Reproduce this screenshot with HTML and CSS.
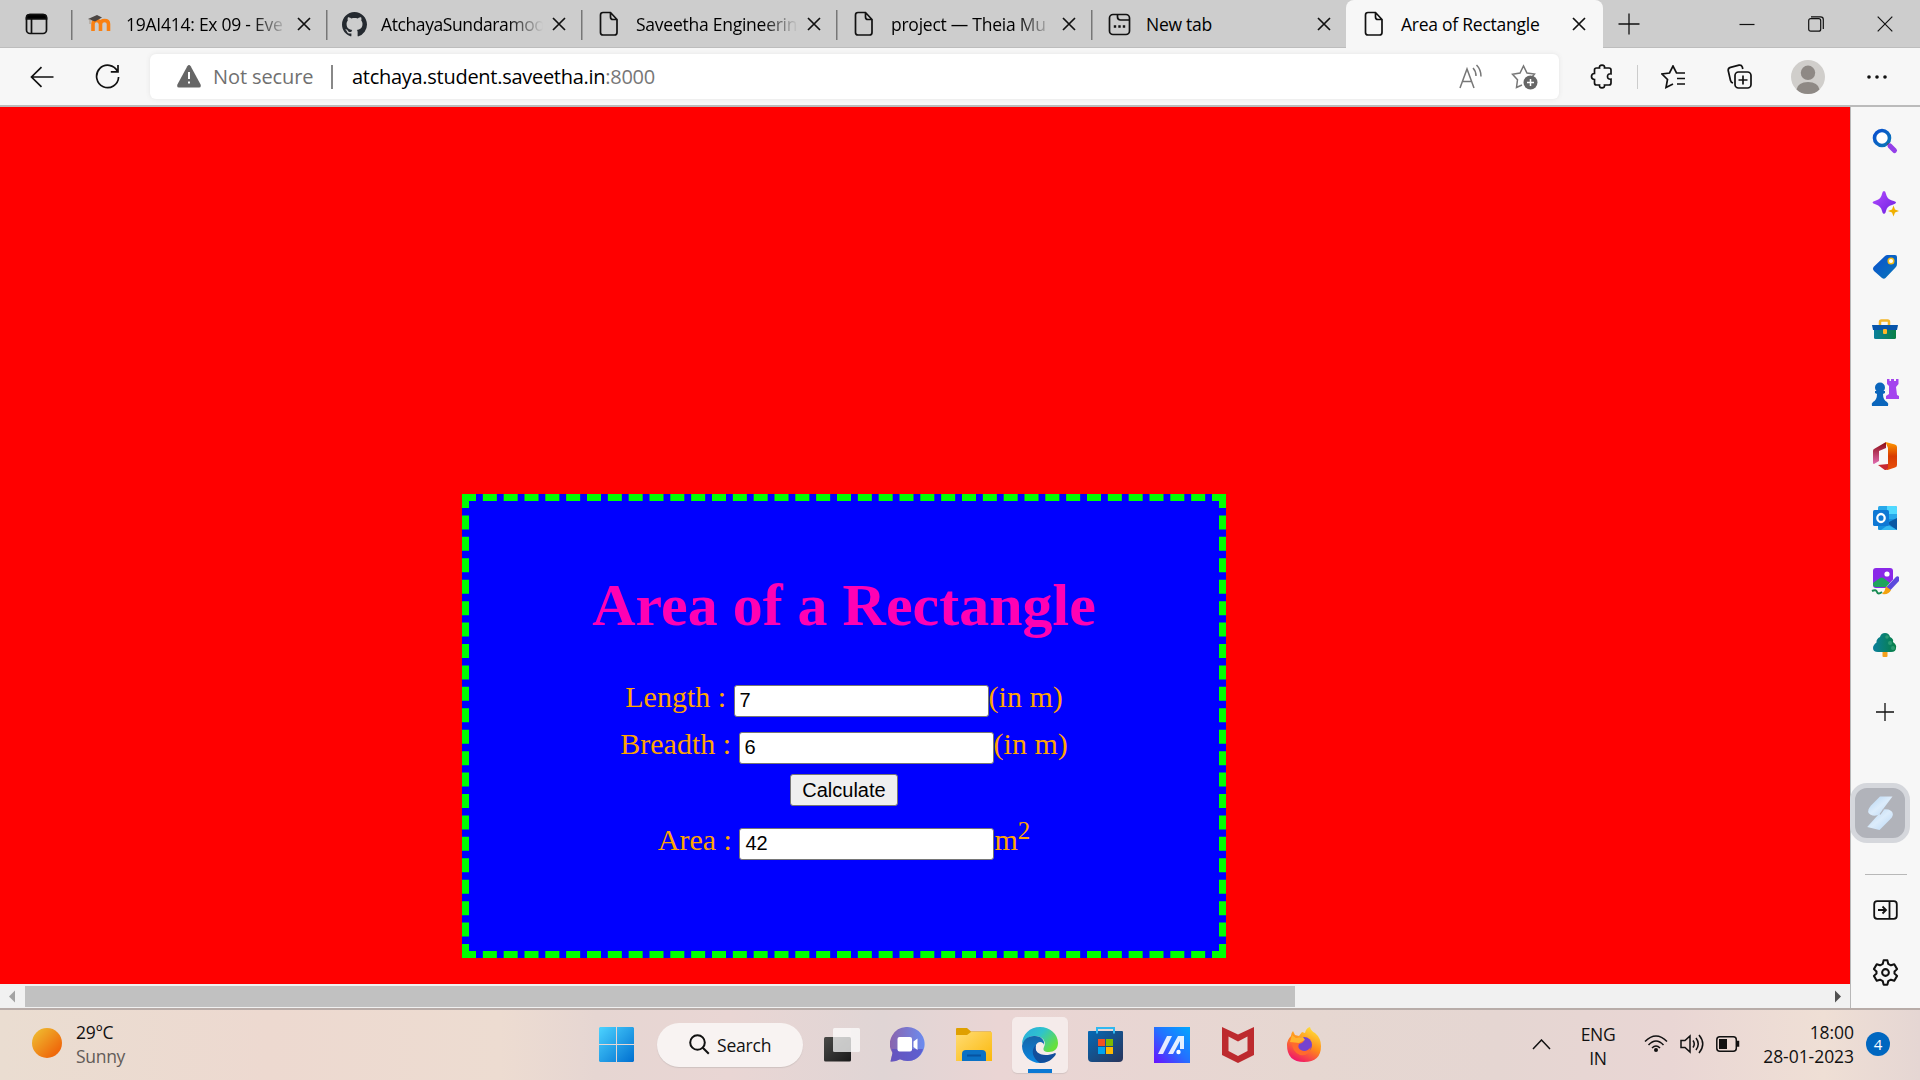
FILE: index.html
```html
<!DOCTYPE html>
<html lang="en">
<head>
<meta charset="utf-8">
<title>Area of Rectangle</title>
<link rel="stylesheet" href="styles.css">
</head>
<body>
<svg class="defs" aria-hidden="true">
  <defs>
    <linearGradient id="gBlue" x1="0" y1="0" x2="1" y2="1"><stop offset="0" stop-color="#0a4fd0"/><stop offset="1" stop-color="#0a78b8"/></linearGradient>
    <linearGradient id="gPurple" x1="0" y1="0" x2="1" y2="1"><stop offset="0" stop-color="#b44cff"/><stop offset="1" stop-color="#6b1fe0"/></linearGradient>
    <linearGradient id="gTool" x1="0" y1="0" x2="1" y2="0"><stop offset="0" stop-color="#0a7f9c"/><stop offset="1" stop-color="#088044"/></linearGradient>
    <linearGradient id="gOfficeR" x1="0" y1="0" x2="0" y2="1"><stop offset="0" stop-color="#ff9a00"/><stop offset=".5" stop-color="#d83b01"/><stop offset="1" stop-color="#e8500c"/></linearGradient>
    <linearGradient id="gOfficeL" x1="0" y1="0" x2="0" y2="1"><stop offset="0" stop-color="#8c0a10"/><stop offset="1" stop-color="#e06bb0"/></linearGradient>
    <linearGradient id="gSun" x1="0" y1="0" x2="1" y2="1"><stop offset=".1" stop-color="#efb92f"/><stop offset=".8" stop-color="#ef6a0c"/></linearGradient>
    <linearGradient id="gWin" x1="0" y1="0" x2="35" y2="35" gradientUnits="userSpaceOnUse"><stop offset="0" stop-color="#4cd3ff"/><stop offset="1" stop-color="#006fd0"/></linearGradient>
    <linearGradient id="gChat" x1="0" y1="0" x2="1" y2="0"><stop offset="0" stop-color="#8a63ad"/><stop offset="1" stop-color="#6b8cf0"/></linearGradient>
    <linearGradient id="gFolder" x1="0" y1="0" x2="1" y2="1"><stop offset="0" stop-color="#ffdc73"/><stop offset="1" stop-color="#fbb80c"/></linearGradient>
    <linearGradient id="gEdgeTop" x1="0" y1="0" x2="1" y2=".6"><stop offset="0" stop-color="#2aa9e0"/><stop offset=".5" stop-color="#2fc3cc"/><stop offset="1" stop-color="#66e03c"/></linearGradient>
    <linearGradient id="gEdgeSide" x1="0" y1="0" x2="0" y2="1"><stop offset="0" stop-color="#1565a8"/><stop offset="1" stop-color="#0a86e0"/></linearGradient>
    <linearGradient id="gStore" x1="0" y1="0" x2="1" y2="1"><stop offset="0" stop-color="#0569b5"/><stop offset="1" stop-color="#29345a"/></linearGradient>
    <linearGradient id="gAsus" x1="0" y1="1" x2="1" y2="0"><stop offset="0" stop-color="#6a10ff"/><stop offset=".5" stop-color="#2470ff"/><stop offset="1" stop-color="#00a8ff"/></linearGradient>
    <linearGradient id="gFox" x1=".8" y1="0" x2=".3" y2="1"><stop offset="0" stop-color="#ffe63c"/><stop offset=".5" stop-color="#ff8a1a"/><stop offset="1" stop-color="#f0136c"/></linearGradient>
    <linearGradient id="gTask" x1="0" y1="0" x2="1" y2="1"><stop offset="0" stop-color="#4a4a48"/><stop offset="1" stop-color="#1a1a1a"/></linearGradient>
    <linearGradient id="gPale" x1="0" y1="0" x2="1" y2="1"><stop offset="0" stop-color="#b4d4f2"/><stop offset=".5" stop-color="#dcecfb"/><stop offset="1" stop-color="#b8d6f4"/></linearGradient>
    <symbol id="page" viewBox="0 0 20 26"><path d="M4 1.5H11.5L18 8.500V21.500Q18 24 15.500 24H4Q1.500 24 1.500 21.500V4Q1.500 1.500 4 1.500ZM11.500 1.500V6Q11.500 8.500 14 8.500H18"/></symbol>
    <symbol id="x" viewBox="0 0 14 14"><path d="M1 1 13 13M13 1 1 13"/></symbol>
  </defs>
</svg>

<header class="tabstrip">
  <div class="tab-actions">
    <svg class="line" width="23" height="22" viewBox="0 0 23 22"><rect x="1.500" y="1.500" width="20" height="19" rx="3.500"/><path d="M1.500 6V4.500Q1.500 1.500 5 1.500H18Q21.500 1.500 21.500 4.500V6Z" fill="#000"/><path d="M6.500 6V20"/></svg>
  </div>
  <div class="tab">
    <span class="fav"><svg width="25" height="18" viewBox="0 0 25 18"><path d="M6 16V9Q6 5.500 9.500 5.500T13.500 9V16M13.500 9Q13.500 5.500 17.500 5.500T21.500 9V16" fill="none" stroke="#f98012" stroke-width="3.600"/><path d="M1 4 10 0 15 2.500 8 6.500Z" fill="#4c4644"/><path d="M3 4V9" stroke="#a89888"/></svg></span>
    <span class="title fade">19AI414: Ex 09 - Eve</span><svg class="close"><use href="#x"/></svg>
  </div>
  <div class="tab">
    <span class="fav"><svg width="25" height="25" viewBox="0 0 16 16"><path fill="#24292f" d="M8 0C3.580 0 0 3.580 0 8c0 3.540 2.290 6.530 5.470 7.590.4.070.55-.17.55-.38 0-.19-.01-.82-.01-1.490-2.010.37-2.530-.49-2.690-.94-.09-.23-.48-.94-.82-1.130-.28-.15-.68-.52-.01-.53.63-.01 1.080.58 1.230.82.72 1.210 1.870.87 2.330.66.07-.52.28-.87.51-1.070-1.780-.2-3.640-.89-3.640-3.950 0-.87.31-1.590.82-2.150-.08-.2-.36-1.020.08-2.120 0 0 .67-.21 2.200.82.64-.18 1.320-.27 2-.27s1.360.09 2 .27c1.530-1.040 2.200-.82 2.200-.82.44 1.100.16 1.920.08 2.120.51.56.82 1.270.82 2.150 0 3.070-1.870 3.750-3.650 3.950.29.25.54.73.54 1.480 0 1.070-.01 1.930-.01 2.200 0 .21.15.46.55.38A8.010 8.010 0 0 0 16 8c0-4.420-3.580-8-8-8z"/></svg></span>
    <span class="title fade repo">AtchayaSundaramoo</span><svg class="close"><use href="#x"/></svg>
  </div>
  <div class="tab">
    <span class="fav"><svg class="line page"><use href="#page"/></svg></span>
    <span class="title fade">Saveetha Engineerin</span><svg class="close"><use href="#x"/></svg>
  </div>
  <div class="tab">
    <span class="fav"><svg class="line page"><use href="#page"/></svg></span>
    <span class="title fade">project — Theia Mu</span><svg class="close"><use href="#x"/></svg>
  </div>
  <div class="tab">
    <span class="fav"><svg class="line" width="23" height="23" viewBox="0 0 23 23"><rect x="1.500" y="1.500" width="20" height="20" rx="3.500"/><path d="M9.500 1.500V4Q9.500 7 12.500 7H21.500"/><path d="M5.800 13.500h2.400M10.300 13.500h2.400M14.800 13.500h2.400" stroke-width="2.600"/></svg></span>
    <span class="title">New tab</span><svg class="close"><use href="#x"/></svg>
  </div>
  <div class="tab active">
    <span class="fav"><svg class="line page"><use href="#page"/></svg></span>
    <span class="title">Area of Rectangle</span><svg class="close"><use href="#x"/></svg>
  </div>
  <svg class="newtab" width="22" height="22" viewBox="0 0 22 22"><path d="M11 .5V21.500M.5 11H21.500"/></svg>
  <div class="window-controls">
    <svg width="16" height="16" viewBox="0 0 16 16"><path d="M.5 8.500H15.500"/></svg>
    <svg width="16" height="16" viewBox="0 0 16 16"><rect x=".7" y="2.700" width="12" height="12.500" rx="2"/><path d="M3 .8H12.500Q15.300.8 15.300 3.500V13"/></svg>
    <svg width="16" height="16" viewBox="0 0 16 16"><path d="M.7.7 15.300 15.300M15.300.7.7 15.300"/></svg>
  </div>
</header>

<nav class="toolbar">
  <svg class="line back" width="24" height="22" viewBox="0 0 24 22"><path d="M23.500 11H1.500M11.500 1.200 1.500 11 11.500 20.800"/></svg>
  <svg class="line reload" width="25" height="26" viewBox="0 0 25 26"><path d="M22.500 7.500A11 11.200 0 1 0 23.600 13M23 1V7.800H15.800"/></svg>
  <div class="address">
    <svg class="warn" width="24" height="23" viewBox="0 0 24 23"><path d="M10.300 1.200Q12-1 13.700 1.200L23.600 19.500Q24.500 22.500 22 22.500H2Q-.5 22.500.4 19.500Z" fill="#666"/><path d="M12 7V14M12 16.500V18.500" stroke="#fff" stroke-width="2"/></svg>
    <span class="security">Not secure</span>
    <i class="bar"></i>
    <span class="url">atchaya.student.saveetha.in<span class="port">:8000</span></span>
    <svg class="read" width="24" height="26" viewBox="0 0 24 26"><path d="M1 24 8 5 15 24M3.500 17.500H12.500M14 4Q17 7 17 12M17.500 1Q22 5.500 22 12.500"/></svg>
    <svg class="addfav" width="27" height="26" viewBox="0 0 27 26"><path d="M11 21 5.500 23.500 6.500 15.800 1.500 10.200 9 9 12.500 2 16 9 23.500 10 21.500 12.500"/><circle cx="19.500" cy="18.500" r="7" fill="#666" stroke="none"/><path d="M19.500 15V22M16 18.500H23" stroke="#fff"/></svg>
  </div>
  <svg class="line puzzle" width="23" height="25" viewBox="0 0 23 25"><path d="M6.500 4H9.500Q9 1.200 12 1.200T14.500 4H19Q21 4 21 6V9.800Q17.500 9.500 17.500 12.500T21 15.200V19Q21 21 19 21H14.500Q15 23.800 12 23.800T9.500 21H6.500Q4.500 21 4.500 19V15.500Q1.500 15.500 1.500 12.500T4.500 9.500V6Q4.500 4 6.500 4Z"/></svg>
  <i class="bar pale"></i>
  <svg class="line favs" width="25" height="24" viewBox="0 0 25 24"><path d="M12 19 5 22.500 6.500 14.500 1 9 8.500 8 12 1 15.500 8H24M16 13.500H24M16 19H24"/></svg>
  <svg class="line coll" width="25" height="25" viewBox="0 0 25 25"><rect x="8" y="8" width="16" height="16" rx="3.500"/><path d="M16 11.500V20.500M11.500 16H20.500M6 19Q4 18.500 3.500 16.500L1.200 6.500Q1 4 3.500 3.400L12 1.200Q14.500.8 15.300 3L15.800 5"/></svg>
  <svg class="avatar" width="34" height="34" viewBox="0 0 34 34"><circle cx="17" cy="17" r="17" fill="#d0cecb"/><circle cx="17" cy="12.800" r="7.200" fill="#8e8985"/><path d="M5.500 29.500Q7 22 17 22T28.500 29.500Q24 34 17 34T5.500 29.500" fill="#8e8985"/></svg>
  <svg class="more" width="20" height="4" viewBox="0 0 20 4"><circle cx="2" cy="2" r="1.800"/><circle cx="10" cy="2" r="1.800"/><circle cx="18" cy="2" r="1.800"/></svg>
</nav>

<div class="workspace">
  <main class="viewport">
    <div class="webpage">
      <form class="box">
        <h1>Area of a Rectangle</h1>
        <div class="row length">Length : <input type="text" value="7">(in m)</div>
        <div class="row breadth">Breadth : <input type="text" value="6">(in m)</div>
        <button type="button">Calculate</button>
        <div class="row area">Area : <input type="text" value="42">m<sup>2</sup></div>
      </form>
    </div>
    <div class="scrollbar">
      <svg width="25" height="24" viewBox="0 0 25 24"><path d="M15 6.500V18.500L9 12.500Z" fill="#a3a3a3"/></svg>
      <div class="thumb"></div>
      <svg class="right" width="25" height="24" viewBox="0 0 25 24"><path d="M10 6.500V18.500L16 12.500Z" fill="#505050"/></svg>
    </div>
  </main>
  <aside class="sidebar">
    <div class="slot"><svg viewBox="0 0 28 28"><circle cx="11" cy="11" r="7.500" fill="#fff" stroke="url(#gBlue)" stroke-width="3.600"/><path d="M16.500 16.500 19 19" stroke="#555" stroke-width="2"/><path d="M19 19 23.500 23.500" stroke="#9440e8" stroke-width="5" stroke-linecap="round"/></svg></div>
    <div class="slot"><svg viewBox="0 0 28 28"><path d="M13 1Q14.500 1 15 4 16 9 21 10.500 25 11.500 25 12.500T21 15Q16 16 15 21 14.500 24 13 24T11 21Q10 16 5 14.500 1.500 13.500 1.500 12.500T5 10.500Q10 9 11 4 11.500 1 13 1Z" fill="url(#gPurple)"/><path d="M22.500 15.500 24 19.500 28 21 24 22.500 22.500 26.500 21 22.500 17 21 21 19.500Z" fill="#f0b000"/></svg></div>
    <div class="slot"><svg viewBox="0 0 28 28"><path d="M2.500 14 14 3Q15 2 16.500 2H24Q26 2 26 4V11Q26 13 24.500 14.500L14.500 25Q13 26.500 11 25L3 18Q1 16 2.500 14Z" fill="url(#gBlue)"/><circle cx="20" cy="8" r="2.800" fill="#fff" stroke="#f7be16" stroke-width="1.500"/></svg></div>
    <div class="slot"><svg viewBox="0 0 28 28"><path d="M9 10V6Q9 4.500 10.500 4.500H16.500Q18 4.500 18 6V10" fill="none" stroke="#f3b62a" stroke-width="2.500"/><rect x="3" y="11" width="22" height="12" rx="1.500" fill="url(#gTool)"/><path d="M1 9H27L26 14H2Z" fill="#0755aa"/><rect x="12" y="13" width="4" height="5" rx="1" fill="#ffb726"/></svg></div>
    <div class="slot"><svg viewBox="0 0 28 28"><path d="M16 0H18.500V2H20V0H23V2H25V0H27.500V5L25 8 26 16 28 17V20H15V17L18 15V7L16 5Z" fill="#a444ee"/><circle cx="9" cy="8.500" r="5" fill="#0b66bc"/><path d="M4 12H14V14L12 15Q12 21 16 23 18 24.500 17 27H1Q0 24.500 2 23 6 21 6 15L4 14Z" fill="#0b66bc"/></svg></div>
    <div class="slot"><svg viewBox="0 0 28 28"><path d="M3 7 15 0V6L8 9V19L3 22Q2 22 2 21V9Q2 7.500 3 7Z" fill="url(#gOfficeL)"/><path d="M14.500 0 24 2.500Q26 3 26 5V23Q26 25 24 25.500L15 28.500 17 22V6Z" fill="url(#gOfficeR)"/><path d="M7 23 17 22V26L14.500 28.500Z" fill="#c8282f"/></svg></div>
    <div class="slot"><svg viewBox="0 0 28 28"><rect x="7" y="1" width="19" height="24" rx="1.500" fill="#28a8ea"/><path d="M16 1H24.500Q26 1 26 2.500V9H16Z" fill="#50d9ff"/><path d="M7 14H26V25H9Q7 25 7 23Z" fill="#1490df"/><path d="M26 13V25L16 18Z" fill="#0a58a4"/><path d="M17 20 26 25H10Z" fill="#35b8f1"/><rect x="2" y="5" width="16" height="16" rx="1.500" fill="#0f78d4"/><ellipse cx="10" cy="13" rx="3.700" ry="4" fill="none" stroke="#fff" stroke-width="2.300"/></svg></div>
    <div class="slot"><svg viewBox="0 0 28 28"><rect x="2" y="0" width="20" height="20" rx="3" fill="#8a28e8"/><circle cx="16" cy="6" r="2.600" fill="#fff"/><path d="M2 15 9 10Q11 9 13 10.500L19 15 17 19H5Q2 19 2 16Z" fill="#20a45c"/><path d="M28 10 18 21" stroke="#f6f6f6" stroke-width="7"/><path d="M26.500 11 18 20" stroke="#5b49dd" stroke-width="5" stroke-linecap="round"/><path d="M15 18.500 20 22Q18 27 11 26 14 23.500 15 18.500Z" fill="#f4a20d"/><path d="M1 23Q5 21 6 24T11 24" fill="none" stroke="#168b52" stroke-width="2"/></svg></div>
    <div class="slot"><svg viewBox="0 0 28 28"><rect x="11.500" y="19" width="5" height="7" rx="1" fill="#f5a01b"/><path d="M14 2Q18 2 19 6 23 8 22 11 26 14 25 17 25 21 20 21H7Q2 21 2 17 2 14 5.500 11.500 5 8 9 6 10 2 14 2Z" fill="url(#gTool)"/><g fill="#3aa57c" opacity=".7"><circle cx="16" cy="6" r="1.800"/><circle cx="19" cy="12" r="2"/><circle cx="22" cy="17" r="2"/></g></svg></div>
    <div class="slot add"><svg class="thin" width="18" height="18" viewBox="0 0 18 18"><path d="M9 0V18M0 9H18"/></svg></div>
    <div class="widget"><svg viewBox="0 0 26 34"><path d="M13 .5H25.500L12 18.500Q10 20 5.500 19.500 0 18 1.500 13.500 2 12 4 9.500Z" fill="url(#gPale)"/><path d="M12.500 34 .2 31 15 14.500Q17 12.500 21.500 13.500 27 15.500 25.500 20 25 21.500 23 23.500Z" fill="url(#gPale)"/><path d="M13 18.500 16.500 13.500" stroke="#b1b3ba" stroke-width="1.200"/></svg></div>
    <hr>
    <div class="slot panel"><svg class="line" width="25" height="20" viewBox="0 0 25 20"><rect x="1.200" y="1.200" width="22.600" height="17.600" rx="3"/><path d="M16.500 1V19M5 10H13M9.500 6.500 13 10 9.500 13.500"/></svg></div>
    <div class="slot gear"><svg class="line" viewBox="0 0 24 24"><circle cx="12" cy="12" r="3"/><path d="M10.300 1.200H13.700L14.400 4.300 16.800 5.600 19.800 4.600 22.300 9 20 11.200V12.800L22.300 15 19.800 19.400 16.800 18.400 14.400 19.700 13.700 22.800H10.300L9.600 19.700 7.200 18.400 4.200 19.400 1.700 15 4 12.800V11.200L1.700 9 4.200 4.600 7.200 5.600 9.600 4.300Z" stroke-linejoin="round"/></svg></div>
  </aside>
</div>

<footer class="taskbar">
  <div class="weather">
    <svg width="30" height="30" viewBox="0 0 30 30"><circle cx="15" cy="15" r="15" fill="url(#gSun)"/></svg>
    <div class="lines"><span>29°C</span><span class="dim">Sunny</span></div>
  </div>
  <div class="apps">
    <svg width="35" height="35" viewBox="0 0 35 35"><path d="M1 0H17V17H0V1ZM18 0H34L35 1V17H18ZM0 18H17V35H1L0 34ZM18 18H35V34L34 35H18Z" fill="url(#gWin)"/></svg>
    <div class="search"><svg width="21" height="21" viewBox="0 0 21 21"><circle cx="8.500" cy="8.500" r="7.300"/><path d="M13.800 13.800 19.800 19.800"/></svg><span>Search</span></div>
    <svg class="task" width="36" height="35" viewBox="0 0 36 35"><rect y="10" width="27" height="24.500" rx="1.500" fill="url(#gTask)"/><rect x="9" y="1" width="27" height="24" rx="1.500" fill="#fff" opacity=".72"/><path d="M27 1H34.500Q36 1 36 2.500V25H9V10H27Z" fill="#eee" opacity=".1"/></svg>
    <svg class="chat" width="35" height="35" viewBox="0 0 35 35"><path d="M17.500 0A17 17 0 1 1 10 32.200Q5 35 .5 34.500L2.500 26A17 17 0 0 1 17.500 0Z" fill="url(#gChat)"/><path d="M2 22H33Q29 34 17.500 34 13 34 10 32.300 5 35 .5 34.500L2.500 26Z" fill="#574fc4" opacity=".7"/><rect x="7.500" y="10" width="14.500" height="14.500" rx="2" fill="#fff"/><path d="M23.500 14.500 27.500 11.500V23L23.500 20Z" fill="#fff"/></svg>
    <svg class="folder" width="36" height="34" viewBox="0 0 36 34"><path d="M0 1Q0 0 1 0H11L15 3.500H35V10H0Z" fill="#dfa000"/><path d="M0 7H11L15 4H35Q36 4 36 5V33H0Z" fill="url(#gFolder)"/><path d="M6 33V26Q6 22 10 22H26Q30 22 30 26V33Z" fill="#0b71c4"/><path d="M11 27.500H25" stroke="#0753a0" stroke-width="2"/></svg>
    <div class="running"><svg width="36" height="36" viewBox="0 0 36 36"><path d="M18 0C28 0 36 7 36 16 36 22 32 25 27 25 22 25 20.500 23 22 20 25 14 20 9 13 9 6 9 1 14 0 18 0 7 8 0 18 0Z" fill="url(#gEdgeTop)"/><path d="M0 19C1 12 7 8.500 13 9 19 9 23 13 22 18 22 15 16 13 14 18 12 26 19 33 28 32 25 35 22 36 18 36 8 36 0 28 0 19Z" fill="url(#gEdgeSide)"/><path d="M14 18C11 26 21 31 33 26 34 26 34 27 33.500 28 30 33 25 36 18 36 11 32 8 23 14 18Z" fill="#124e9b"/></svg></div>
    <svg class="store" width="35" height="35" viewBox="0 0 35 35"><path d="M9 7V1H26V7" fill="none" stroke="#30b8f0" stroke-width="2"/><path d="M0 5Q0 4 1 4H34Q35 4 35 5V31Q35 35 31 35H4Q0 35 0 31Z" fill="url(#gStore)"/><path d="M9 2V6.500M26 2V6.500" stroke="#30b8f0" stroke-width="2"/><path d="M10 12H17V19H10Z" fill="#f25022"/><path d="M18 12H25V19H18Z" fill="#7fba00"/><path d="M10 20H17V27H10Z" fill="#00a4ef"/><path d="M18 20H25V27H18Z" fill="#ffb900"/></svg>
    <svg class="asus" width="36" height="36" viewBox="0 0 36 36"><path d="M0 0H36V36H0Z" fill="url(#gAsus)"/><path d="M4 27 13 9H18L9 27ZM14 27 24 9H30V22H26V14L19 27Z" fill="#fff" opacity=".88"/><circle cx="24.500" cy="25" r="2.200" fill="#fff"/></svg>
    <svg class="mcafee" width="32" height="36" viewBox="0 0 32 36"><path d="M0 0 16 7.500 32 0V28L16 36 0 28ZM6.500 9.500V24L16 29 25.500 24V9.500L16 14.500Z" fill="#bd2a2e" fill-rule="evenodd"/></svg>
    <svg class="fox" width="34" height="36" viewBox="0 0 34 36"><path d="M4 9Q4 6 6 4L8 8 12 9 15 5 18 6Q19 1 23 0 24 4 28 6 34 11 34 19 34 35 17 35 0 35 0 18 0 13 4 9Z" fill="url(#gFox)"/><circle cx="17" cy="18" r="8" fill="#7543cf"/><path d="M5 15Q11 12 17 14 15 17 12 17 10 21 14 23 19 26 24 20 22 30 13 28 5 25 5 15Z" fill="#ff6a2d"/><path d="M3 15 5 8 9 11 16 10 18 13 12 16Z" fill="#ffb32e"/></svg>
  </div>
  <div class="tray">
    <svg class="chev" width="19" height="11" viewBox="0 0 19 11"><path d="M1 10 9.500 1 18 10"/></svg>
    <div class="lines lang"><span>ENG</span><span>IN</span></div>
    <svg class="wifi" width="24" height="18" viewBox="0 0 24 18"><path d="M1 6.500Q12-4.500 23 6.500M4.500 10Q12 2 19.500 10M8 13Q12 9 16 13"/><circle cx="12" cy="15" r="2" fill="#111" stroke="none"/></svg>
    <svg class="sound" width="25" height="20" viewBox="0 0 25 20"><path d="M1 6.500H5L10 2V18L5 13.500H1ZM13 6.500Q15.500 10 13 13.500M16 4Q20.500 10 16 16M19 1Q26.500 10 19 19"/></svg>
    <svg class="battery" width="24" height="16" viewBox="0 0 24 16"><rect x=".8" y=".8" width="19.500" height="14.400" rx="3"/><path d="M21.500 5.500H22.500V10H21.500Z" fill="#111"/><path d="M3 3H11V13H3Z" fill="#111" stroke="none"/></svg>
    <div class="lines clock"><span>18:00</span><span>28-01-2023</span></div>
    <span class="badge">4</span>
  </div>
</footer>
</body>
</html>
```
FILE: styles.css
```css
* { box-sizing: border-box; }
html, body { height: 100%; }
body {
  margin: 0;
  width: 1920px;
  height: 1080px;
  overflow: hidden;
  display: flex;
  flex-direction: column;
  font-family: "Open Sans", "Noto Sans", sans-serif;
  color: #111;
}
svg { flex: none; display: block; }
.defs { position: absolute; width: 0; height: 0; }
.line, .newtab, .window-controls svg, .close { fill: none; stroke: #111; stroke-width: 1.7; }
.thin { fill: none; stroke: #111; stroke-width: 1.3; }

/* Tab strip */
.tabstrip {
  height: 48px;
  flex: none;
  display: flex;
  background: #cdcdcd;
  box-shadow: inset 0 -1px #bdbdbd;
}
.tab-actions { width: 70.5px; padding: 13px 0 0 25px; flex: none; }
.tab {
  width: 255px;
  flex: none;
  display: flex;
  align-items: center;
  background: linear-gradient(#777, #777) 0 10px / 1.5px 30px no-repeat;
}
.fav { width: 25px; margin-left: 16px; display: flex; justify-content: center; flex: none; }
.page { width: 20px; height: 26px; }
.title {
  width: 162px;
  margin: 0 9px 0 14.5px;
  white-space: nowrap;
  font-size: 17.5px;
  line-height: 26px;
  letter-spacing: -0.25px;
  color: #000;
}
.repo { letter-spacing: -0.4px; }
.fade { mask-image: linear-gradient(90deg, #000 78%, transparent 100%); }
.close { width: 14px; height: 14px; }
.tab.active { width: 257px; background: #f7f7f7; border-radius: 8px 8px 0 0; }
.newtab { margin: 13px 0 0 15px; stroke-width: 1.3; }
.window-controls { margin-left: auto; display: flex; gap: 53px; padding: 16px 27px 0 0; }
.window-controls svg { stroke-width: 1.2; }

/* Toolbar */
.toolbar {
  height: 59px;
  flex: none;
  display: flex;
  align-items: center;
  background: #f7f7f7;
  border-bottom: 2px solid #bbb;
}
.back { margin-left: 30px; }
.reload { margin-left: 41px; }
.address {
  width: 1409px;
  height: 45px;
  margin-left: 30px;
  padding-left: 26.5px;
  display: flex;
  align-items: center;
  background: #fff;
  border-radius: 6px;
  box-shadow: 0 0 5px #e4e4e4;
  font-size: 20px;
  white-space: nowrap;
}
.security { width: 101px; margin-left: 12.5px; color: #707070; letter-spacing: -0.1px; }
.bar { width: 1.5px; height: 24px; margin-left: 17px; background: #888; }
.url { margin-left: 19.5px; color: #000; letter-spacing: -0.28px; }
.port { color: #777; }
.read, .addfav { fill: none; stroke: #777; stroke-width: 1.5; }
.read { margin-left: auto; margin-right: 28px; }
.addfav { margin-right: 21px; }
.puzzle { margin-left: 30.5px; }
.pale { margin-left: 24px; background: #ccc; }
.favs { margin-left: 23px; }
.coll { margin-left: 41px; }
.avatar { margin-left: 39px; }
.more { margin-left: 42px; fill: #111; }

/* Workspace */
.workspace { height: 901px; flex: none; display: flex; }
.viewport { width: 1850px; display: flex; flex-direction: column; }
.webpage { height: 877px; background: #f00; padding: 387px 0 0 462px; }
.box {
  width: 764px;
  height: 464px;
  padding-top: 70px;
  display: flex;
  flex-direction: column;
  align-items: center;
  border: 7px dashed #0f0;
  background: #00f;
  color: orange;
  font: 30px/34px "Liberation Serif", serif;
}
h1 { margin: 0; font-size: 60px; line-height: 68px; color: #ff00b4; white-space: nowrap; }
.row { white-space: pre; height: 34px; flex: none; }
.length { margin-top: 41px; }
.breadth { margin-top: 13px; }
input, button {
  font: 20px/24px "Liberation Sans", sans-serif;
  height: 32px;
  border: 1.5px solid #767676;
  border-radius: 3px;
  color: #000;
}
input { width: 255px; padding: 1px 5px; background: #fff; vertical-align: baseline; }
button { width: 108px; padding: 0; margin-top: 13px; background: #efefef; flex: none; }
.area { margin-top: 17px; }
sup { font-size: 25px; line-height: 0; }
.scrollbar { height: 24px; display: flex; background: #f1f1f1; }
.thumb { width: 1270px; height: 21px; margin-top: 2px; background: #c1c1c1; }
.scrollbar .right { margin-left: auto; }

/* Side bar */
.sidebar {
  width: 70px;
  padding-top: 2px;
  border-left: 1px solid #b8b8b8;
  background: #f7f7f7;
  display: flex;
  flex-direction: column;
}
.slot { height: 63px; padding-right: 1px; flex: none; display: flex; align-items: center; justify-content: center; }
.slot > svg:not([width]) { width: 28px; height: 28px; }
.slot.add { height: 72px; }
.slot.gear > svg { width: 27px; height: 27px; }
.slot svg.line { stroke-width: 1.8; }
.widget {
  width: 60px;
  height: 60px;
  margin: 35px 0 0 -1px;
  flex: none;
  display: flex;
  align-items: center;
  justify-content: center;
  border: 5px solid #d5d7dc;
  border-radius: 17px;
  background: #b1b3ba;
}
.widget svg { width: 26px; height: 34px; }
.sidebar hr { width: 42px; height: 1px; margin: 31px auto 3px 14px; border: 0; background: #b8b8b8; flex: none; }
.slot.gear { height: 62px; }

/* Taskbar */
.taskbar {
  height: 72px;
  flex: none;
  display: flex;
  border-top: 2px solid #b8aca8;
  background: linear-gradient(90deg, #eaddd1 0, #edd9d0 14%, #eddcd1 26%, #e6d6d2 31%, #e9d6d4 38%, #e0d5d5 46%, #ead5d4 52%, #e6d7d1 68%, #e5d6d2 78%, #e9d6d4 87%, #efdfd5 95%, #e5d6d3 100%);
}
.weather { width: 599px; flex: none; display: flex; padding: 18px 0 0 32px; }
.lines { display: flex; flex-direction: column; font-size: 17.5px; line-height: 24px; white-space: nowrap; }
.weather .lines { margin: -8px 0 0 14px; letter-spacing: -0.3px; }
.dim { color: #625b58; }
.apps { width: 724px; display: flex; align-items: center; flex: none; padding-bottom: 1px; }
.search {
  width: 146px;
  height: 44px;
  margin-left: 23px;
  padding-left: 32px;
  display: flex;
  align-items: center;
  gap: 7px;
  border-radius: 22px;
  background: #f8f3f2;
  box-shadow: 0 1px 1px #cfc2c0;
  font-size: 17.5px;
  letter-spacing: -0.2px;
}
.search svg { fill: none; stroke: #111; stroke-width: 2; }
.task { margin-left: 21px; }
.chat { margin-left: 30px; }
.folder { margin-left: 31px; }
.running {
  width: 56px;
  height: 56px;
  margin-left: 20px;
  padding: 10px;
  border-radius: 5px;
  background: linear-gradient(#0a78d4, #0a78d4) 16px 52px / 24px 4px no-repeat, #f5ebea;
  box-shadow: 0 1px 1px #d3c4c2;
}
.store { margin-left: 20px; }
.asus { margin-left: 31px; }
.mcafee { margin-left: 32px; }
.fox { margin-left: 33px; }
.tray { width: 388px; margin-left: auto; display: flex; align-items: center; padding-bottom: 2px; }
.tray > svg { fill: none; stroke: #111; stroke-width: 1.5; }
.lang { width: 40px; margin-left: 27px; align-items: center; padding-top: 3px; letter-spacing: -0.3px; }
.wifi { margin-left: 26px; }
.sound { margin-left: 12px; }
.battery { margin-left: 11px; }
.clock { width: 100px; margin-left: 14px; align-items: flex-end; letter-spacing: -0.05px; }
.badge {
  width: 24px;
  height: 24px;
  margin-left: 12px;
  border-radius: 50%;
  background: #0067c0;
  color: #fff;
  font-size: 15px;
  line-height: 24px;
  text-align: center;
}
```
